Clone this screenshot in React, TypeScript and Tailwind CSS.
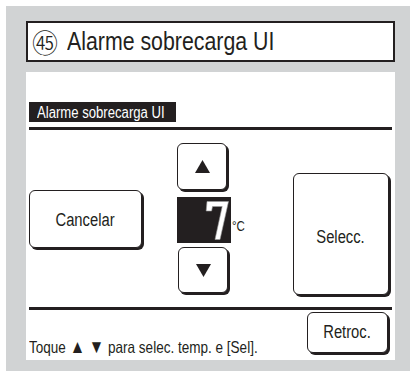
const sans = {
  fontFamily: '"Liberation Sans", Arial, sans-serif',
};

// condensed face like the device font: Liberation Sans squeezed horizontally
const N = ({
  children,
  className = "",
}: {
  children: React.ReactNode;
  className?: string;
}) => (
  <span className={`inline-block scale-x-[0.82] whitespace-nowrap ${className}`}>
    {children}
  </span>
);

const Key = ({
  className,
  children,
}: {
  className: string;
  children?: React.ReactNode;
}) => (
  <div
    className={`flex shrink-0 items-center justify-center rounded-[6px] border border-[#231f20] bg-white text-[#231f20] shadow-[2px_2px_0_0_#231f20] ${className}`}
  >
    {children}
  </div>
);

const Tri = ({ down }: { down?: boolean }) => (
  <svg width="15" height="13" viewBox="0 0 15 13">
    <polygon
      points={down ? "0,0 15,0 7.5,13" : "7.5,0 15,13 0,13"}
      fill="#231f20"
    />
  </svg>
);

export default function App() {
  return (
    <div
      className="h-[372px] w-[411px] bg-white pt-[6px] pl-[6px] pr-[1px] pb-[1px]"
      style={sans}
    >
      <div className="flex h-[365px] w-[404px] flex-col bg-[#d1d3d4] pt-[15px] pl-[20px]">
        {/* title */}
        <div className="flex h-[41px] w-[369px] items-center border-2 border-[#231f20] bg-white pl-[4px] text-[26px] leading-[37px] text-[#231f20]">
          <span
            className="text-[26px] font-light"
            style={{ fontFamily: '"Noto Sans CJK JP", sans-serif' }}
          >
            ㊺
          </span>
          <N className="ml-[9px] origin-left">Alarme sobrecarga UI</N>
        </div>

        {/* screen */}
        <div className="mt-[10px] flex h-[288px] w-[369px] flex-col overflow-hidden bg-white px-[3px] pt-[30px] text-[#231f20]">
          <div className="h-[20px] w-[147px] bg-[#231f20] pt-[2px] pl-[8px] text-[16px] leading-[18px] text-white">
            <N className="origin-left">Alarme sobrecarga UI</N>
          </div>
          <div className="mt-[5px] h-[3px] w-[363px] bg-[#231f20]" />

          <div className="flex items-start">
            <Key className="mt-[60px] h-[58px] w-[113px] pt-[3px] text-[18px]">
              <N>Cancelar</N>
            </Key>

            <div className="ml-[35px] flex w-[116px] flex-col pt-[13px]">
              <Key className="h-[47px] w-[50px]">
                <Tri />
              </Key>
              <div className="mt-[7px] flex items-center">
                <div className="h-[46px] w-[54px] bg-[#231f20]">
                  <svg width="54" height="46" viewBox="0 0 54 46">
                    <path
                      d="M30,4.5 L51.5,4.5 L43,42.5 L38,42.5 L45.2,9.5 L35.5,9.5 L34.6,14 L29.2,14 Z"
                      fill="white"
                      stroke="#9a9a9a"
                      strokeWidth="0.6"
                    />
                  </svg>
                </div>
                <N className="mt-[12px] ml-[1px] origin-left text-[14px] leading-none">
                  °C
                </N>
              </div>
              <Key className="mt-[4px] ml-[1px] h-[46px] w-[50px]">
                <Tri down />
              </Key>
            </div>

            <Key className="mt-[43px] h-[122px] w-[96px] pt-[6px] text-[18px]">
              <N>Selecc.</N>
            </Key>
          </div>

          <div className="mt-[12px] h-[3px] w-[363px] bg-[#231f20]" />

          <div className="flex flex-1 items-end">
            <div className="min-w-0 flex-1">
              <N className="mb-[1px] origin-left text-[16.5px] leading-[16px]">
                Toque <span className="text-[19px] leading-none">▲</span>{" "}
                <span className="text-[19px] leading-none">▼</span> para selec.
                temp. e [Sel].
              </N>
            </div>
            <Key className="mr-[4px] mb-[7px] h-[41px] w-[81px] text-[18px]">
              <N>Retroc.</N>
            </Key>
          </div>
        </div>
      </div>
    </div>
  );
}
